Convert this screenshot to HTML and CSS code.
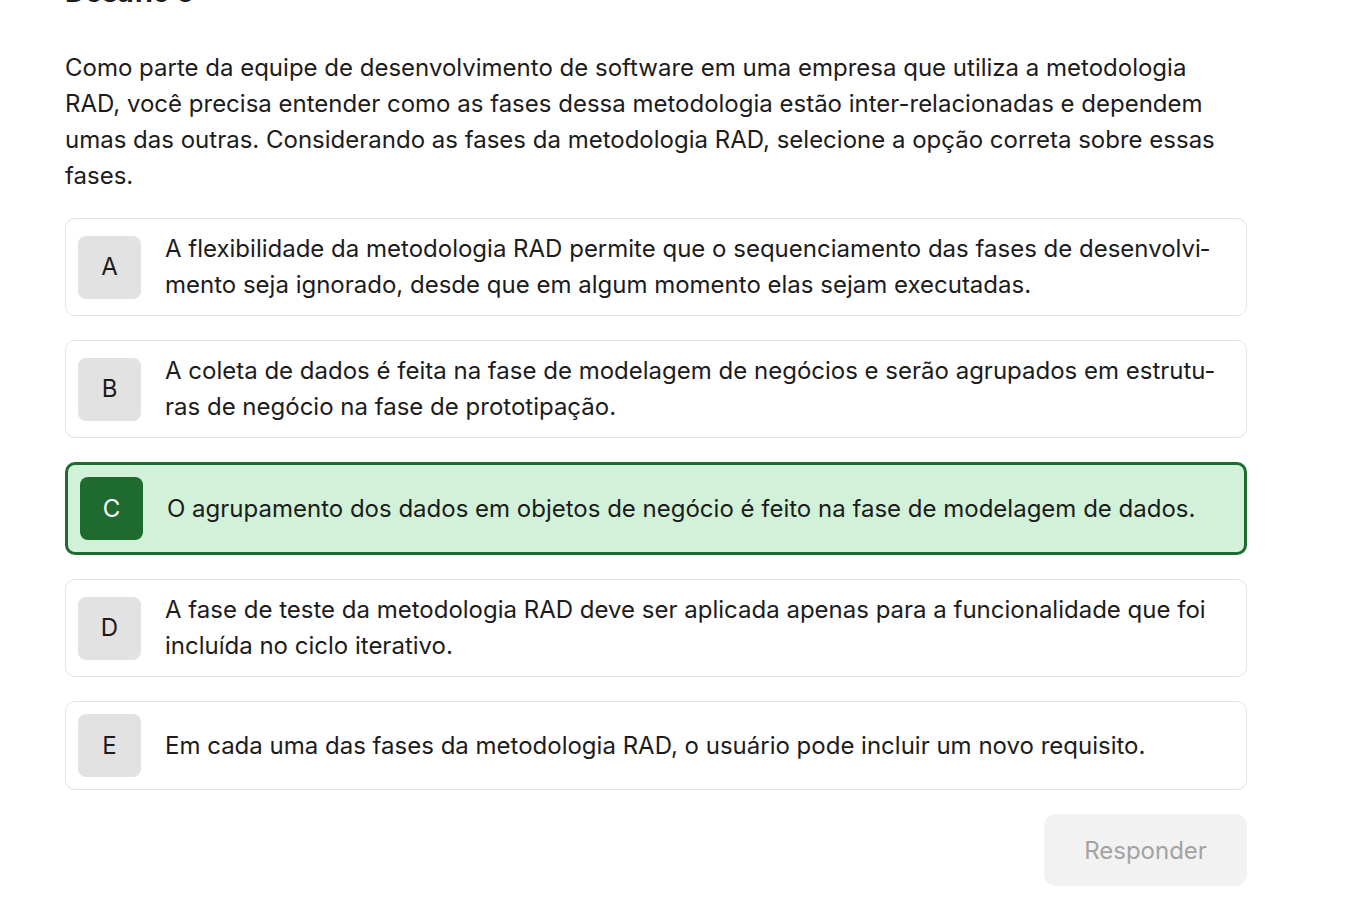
FILE: index.html
```html
<!DOCTYPE html>
<html>
<head>
  <title>Desafio 5</title>
  <meta http-equiv="Content-Type" content="text/html; charset=UTF-8" />
  <link rel="stylesheet" href="styles.css">
</head>
<body>
  <div class="container">
    <h2 class="title">Desafio 5</h2>
    <p class="question">Como parte da equipe de desenvolvimento de software em uma empresa que utiliza a metodologia RAD, você precisa entender como as fases dessa metodologia estão inter-relacionadas e dependem umas das outras. Considerando as fases da metodologia RAD, selecione a opção correta sobre essas fases.</p>

    <div class="options">
      <div class="option">
        <span class="letter">A</span>
        <span class="text">A flexibilidade da metodologia RAD permite que o sequenciamento das fases de desenvolvi&shy;mento seja ignorado, desde que em algum momento elas sejam executadas.</span>
      </div>
      <div class="option">
        <span class="letter">B</span>
        <span class="text">A coleta de dados é feita na fase de modelagem de negócios e serão agrupados em estrutu&shy;ras de negócio na fase de prototipação.</span>
      </div>
      <div class="option selected">
        <span class="letter">C</span>
        <span class="text">O agrupamento dos dados em objetos de negócio é feito na fase de modelagem de dados.</span>
      </div>
      <div class="option">
        <span class="letter">D</span>
        <span class="text">A fase de teste da metodologia RAD deve ser aplicada apenas para a funcionalidade que foi incluída no ciclo iterativo.</span>
      </div>
      <div class="option">
        <span class="letter">E</span>
        <span class="text">Em cada uma das fases da metodologia RAD, o usuário pode incluir um novo requisito.</span>
      </div>
    </div>

    <div class="actions">
      <button class="submit" disabled>Responder</button>
    </div>
  </div>
</body>
</html>
```

FILE: styles.css
```css
body {
  margin: 0;
  background: #fff;
  font-family: Inter, "Noto Sans", sans-serif;
  color: #1c1c1c;
}
.container {
  width: 1182px;
  margin-left: 65px;
}
.title {
  font-size: 28px;
  font-weight: 700;
  line-height: 36px;
  margin: -26px 0 40px;
}
.question {
  font-size: 24px;
  line-height: 36px;
  margin: 0 0 24px;
}
.options {
  display: flex;
  flex-direction: column;
  gap: 24px;
}
.option {
  display: flex;
  align-items: center;
  gap: 24px;
  padding: 12px;
  border: 1px solid #e2e2e2;
  border-radius: 10px;
  font-size: 24px;
  line-height: 36px;
}
.letter {
  flex: none;
  width: 63px;
  height: 63px;
  border-radius: 8px;
  background: #e2e2e2;
  display: flex;
  align-items: center;
  justify-content: center;
}
.text {
  flex: 1;
}
.option.selected {
  border: 3px solid #1e6b30;
  background: #d1f2d9;
}
.option.selected .letter {
  background: #1e6a2f;
  color: #fff;
}
.actions {
  display: flex;
  justify-content: flex-end;
  margin-top: 24px;
}
.submit {
  width: 203px;
  height: 72px;
  border: none;
  border-radius: 12px;
  background: #f2f2f2;
  color: #a3a3a3;
  font-family: inherit;
  font-size: 24px;
}
```
